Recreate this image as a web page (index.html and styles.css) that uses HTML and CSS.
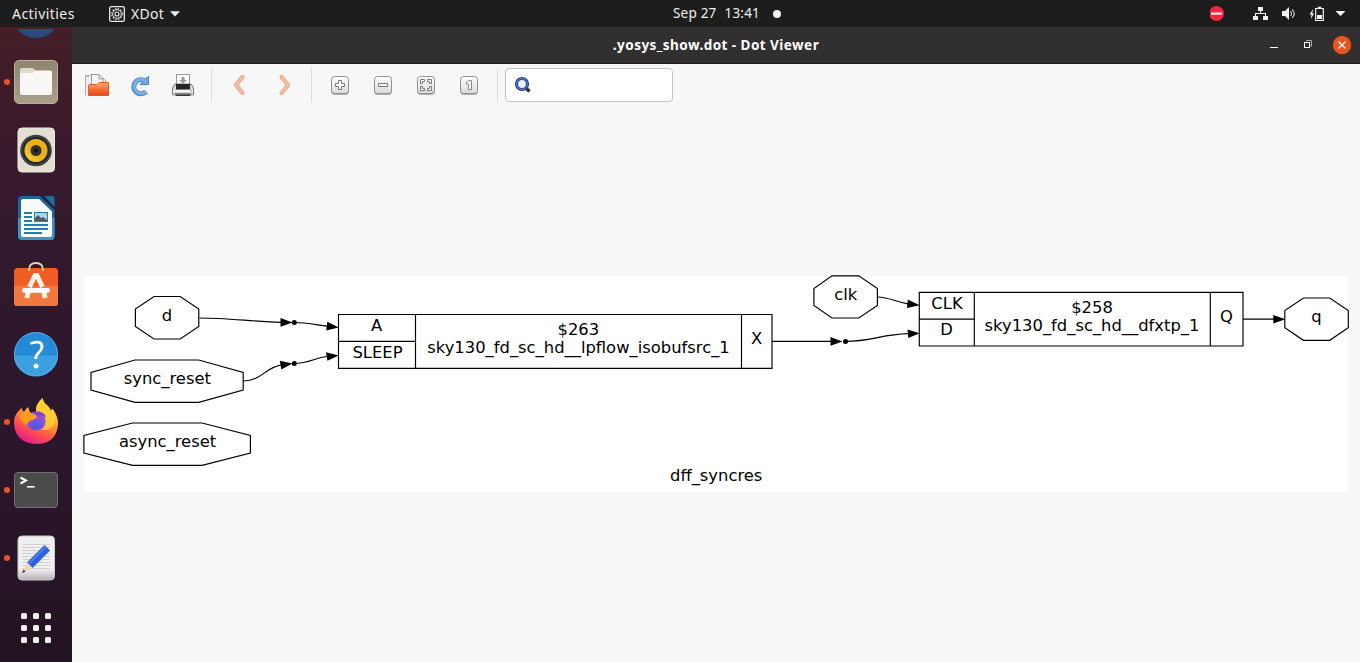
FILE: index.html
```html
<!DOCTYPE html>
<html lang="en">
<head>
<meta charset="utf-8">
<title>.yosys_show.dot - Dot Viewer</title>
<link rel="stylesheet" href="styles.css">
</head>
<body>
<header class="topbar">
  <div class="top-left">
    <span class="activities">Activities</span>
    <svg class="app-icon" width="16" height="16" viewBox="0 0 16 16"><rect x=".7" y=".7" width="14.6" height="14.6" rx="1.5" fill="none" stroke="#eee" stroke-width="1.3"/><circle cx="8" cy="8" r="4.3" fill="none" stroke="#ddd" stroke-width="1"/><circle cx="8" cy="8" r="5.3" fill="none" stroke="#ddd" stroke-width="1.3" stroke-dasharray="1.5 1.28"/><circle cx="8" cy="8" r="2" fill="none" stroke="#eee" stroke-width="1.1"/></svg>
    <span class="app-name">XDot</span>
    <svg class="caret" width="10" height="6" viewBox="0 0 10 6"><path d="M0 .3H10L5 5.5Z" fill="#eee"/></svg>
  </div>
  <div class="clock"><span>Sep 27</span><span>13:41</span><i class="notify"></i></div>
  <svg class="tray" width="140" height="20" viewBox="0 0 140 20">
    <circle cx="6.500" cy="9.500" r="7.500" fill="#f5243f"/><rect x="1" y="8.600" width="11" height="2" fill="#fff"/>
    <g fill="#f2f2f2"><rect x="48" y="3" width="5" height="4"/><rect x="43" y="12" width="5" height="4"/><rect x="53" y="12" width="5" height="4"/><path d="M50 7h1v2h5v3h-1v-2h-9v2h-1V9h5Z"/>
    <path d="M72 7h3l4-4v13l-4-4h-3Z"/><path d="M103.200 5l-3.700 5.500h2l-.7 4.500 3.200-5.500h-1.700Z"/><rect x="107" y="11" width="5" height="4"/><path d="M125.500 7H135.500L130.500 12Z"/></g>
    <path d="M80.500 7.200Q82.500 9.500 80.500 12M82.200 5.300Q86.200 9.500 82.200 13.800" fill="none" stroke="#ccc" stroke-width="1.100"/>
    <path d="M105.700 4.500H113.300V16.500H105.700ZM107.800 3.300h3.400" fill="none" stroke="#f2f2f2" stroke-width="1.200"/>
  </svg>
</header>
<div class="desktop">
  <nav class="dock">
    <div class="dock-cut"><svg width="48" height="21" viewBox="0 0 48 21"><path d="M5 2H43Q36 11 24 11T5 2Z" fill="#294b80"/></svg></div>
    <div class="launcher running"><svg width="48" height="48" viewBox="0 0 48 48">
      <defs><linearGradient id="files" x2="0" y2="1"><stop stop-color="#8e8470"/><stop offset="1" stop-color="#aaa08b"/></linearGradient></defs>
      <rect x="2.500" y="2.500" width="43" height="43" rx="4.500" fill="url(#files)" stroke="#b8b09c"/><path d="M8 12q0-2 2-2h10q2 0 4 3v8H8Z" fill="#ddd9cb"/><path d="M8 17q0-2 2-2h10q2 0 3-2 1-.5 2-.5h13q2 0 2 2v20q0 2.500-2.500 2.500h-27Q8 37 8 34.500Z" fill="#f9f8f6"/></svg></div>
    <div class="launcher"><svg width="48" height="48" viewBox="0 0 48 48">
      <defs><linearGradient id="cone" x1="1" x2="0" y2="1"><stop stop-color="#f0b414"/><stop offset=".5" stop-color="#e8ae12"/><stop offset="1" stop-color="#fad43a"/></linearGradient></defs>
      <rect x="6" y="2" width="36.500" height="44" rx="4" fill="#e3dfd4" stroke="#eee9df"/><circle cx="24" cy="24.500" r="15.800" fill="#3d4248"/><circle cx="24" cy="24.500" r="13.500" fill="#22262a"/><circle cx="24" cy="24.500" r="11.500" fill="url(#cone)"/><circle cx="24" cy="24.500" r="5.500" fill="#30302e"/><circle cx="24" cy="24.500" r="2" fill="#111"/></svg></div>
    <div class="launcher"><svg width="48" height="48" viewBox="0 0 48 48">
      <path d="M6 6q0-4 4-4H28L42.500 16V42q0 4-4 4H10q-4 0-4-4Z" fill="#17699a"/><path d="M6 24H42.500V42q0 4-4 4H10q-4 0-4-4Z" fill="#3f93be"/><path d="M9 7q0-2 2-2H27L40 17.500V41q0 2-2 2H11q-2 0-2-2Z" fill="#f8fafb"/><path d="M32 2h8q2.500 0 2.500 2.500V13Z" fill="#14709f"/>
      <path d="M12 19h8M12 23h8M12 27h8M12 31h24M12 35h24M12 39h18" stroke="#247eac" stroke-width="2"/><rect x="22.500" y="18.500" width="13" height="9" fill="#a9daf4" stroke="#247eac"/><path d="M23 27v-3l3-3 3 3 2-1 4 3v1Z" fill="#535b60"/><path d="M32 19h3v3Z" fill="#f0b929"/></svg></div>
    <div class="launcher"><svg width="48" height="48" viewBox="0 0 48 48">
      <rect x="2" y="6" width="44" height="38" rx="3.500" fill="#f05e25"/><path d="M2 24H46V40.500q0 3.500-3.500 3.500h-37q-3.500 0-3.500-3.500Z" fill="#f0793f"/><path d="M17 9V8q0-7 7-7t7 7v1" fill="none" stroke="#e8d3a0" stroke-width="1.800"/>
      <path d="M17.500 25L23 13.500h2L30.500 25M16.500 29l-1.700 7M31.500 29l1.700 7" fill="none" stroke="#fff3e9" stroke-width="4.800"/><rect x="10" y="26" width="28" height="4.800" rx="2.400" fill="#fff"/></svg></div>
    <div class="launcher"><svg width="48" height="48" viewBox="0 0 48 48"><circle cx="24" cy="24" r="22" fill="#258bd6"/><path d="M2 25.500H46A22 21 0 0 1 2 25.500Z" fill="#3ba0df"/><circle cx="24" cy="24" r="21.500" fill="none" stroke="#5aafe6" stroke-width=".8"/><path d="M18.500 13.500q11.500-4 11.500 3.200c0 5.500-6.300 5.300-6.300 12.300" fill="none" stroke="#fff" stroke-width="2.900"/><circle cx="24" cy="36" r="2.500" fill="#fff"/></svg></div>
    <div class="launcher running"><svg width="48" height="48" viewBox="0 0 48 48">
      <defs><linearGradient id="flame" x1=".8" y1="0" x2=".3" y2="1"><stop stop-color="#ffe546"/><stop offset=".38" stop-color="#ffad2c"/><stop offset=".7" stop-color="#ff534a"/><stop offset="1" stop-color="#e5168d"/></linearGradient><radialGradient id="globe" cx=".5" cy=".8"><stop stop-color="#425be5"/><stop offset="1" stop-color="#9051e2"/></radialGradient></defs>
      <path d="M9.500 9.500Q10 13 12 14q1.500-3.500 4.500-5 0 4 2.500 6l5-1Q23 6 30.500 0q1 5 5.500 8 2 2 3 5 1-1 1-2.500Q46.500 18 46 26 44.500 46 24 46 3 45 2 25 2 18 6 13.500Q8 12 9.500 9.500Z" fill="url(#flame)"/><path d="M30.500 0Q24 6 24 14q8 0 9.500 7 1 8-4.500 11 13 1 14.500-11 1-6-3.500-10.500L39 13Q36 8 34.500 6.500 31 4 30.500 0Z" fill="#ffcf38" opacity=".8"/><circle cx="24" cy="23" r="9.500" fill="url(#globe)"/><path d="M7 17q8-4 12-2l6 2.500q0 3-5 4.500-4 1-5 5-7-4-8-10Z" fill="#ff9a21"/><path d="M21 14q10-2 13 5-5-2-9-1Z" fill="#8146cf"/></svg></div>
    <div class="launcher running"><svg width="48" height="48" viewBox="0 0 48 48"><rect x="2.500" y="6.500" width="43" height="35" rx="3.500" fill="#4b4b4a" stroke="#72706d"/><path d="M8.500 11.500l5.500 3-5.500 3" fill="none" stroke="#fff" stroke-width="2"/><path d="M15 20.800h7.500" stroke="#fff" stroke-width="1.600"/></svg></div>
    <div class="launcher running"><svg width="48" height="48" viewBox="0 0 48 48">
      <defs><linearGradient id="paper" x2="0" y2="1"><stop offset=".75" stop-color="#f1f0f1"/><stop offset="1" stop-color="#b5b2b7"/></linearGradient></defs>
      <rect x="6" y="2" width="36.500" height="44" rx="4" fill="url(#paper)" stroke="#cac7ca"/><path d="M10 10.500h28M10 13.500h28M10 16.500h28M10 19.500h28M10 22.500h28M10 25.500h28M10 28.500h28M10 31.500h28M10 34.500h28" stroke="#d2d2d4"/><path d="M32.500 11l5.500 5.500L20.500 34 15 28.500Z" fill="#2d62db"/><path d="M34 12.500L16.500 30" stroke="#4c80ef" stroke-width="2"/><path d="M15 28.500l5.500 5.500-10 5Z" fill="#f4d6b2"/><path d="M11.500 35.500l2 2-3.500 1.500Z" fill="#333"/></svg></div>
    <div class="show-apps"><i></i><i></i><i></i><i></i><i></i><i></i><i></i><i></i><i></i></div>
  </nav>
  <main class="window">
    <div class="titlebar"><h1>.yosys_show.dot - Dot Viewer</h1>
      <svg class="controls" width="84" height="20" viewBox="0 0 84 20"><path d="M2 12.500h8" stroke="#fff"/><path d="M38.500 6.500V5.500H43.500V11H42" fill="none" stroke="#aaa"/><rect x="36.500" y="7.500" width="5" height="5" fill="none" stroke="#fff"/><circle cx="74" cy="10" r="9.200" fill="#e95420"/><path d="M70.500 6.500l7 7m0-7l-7 7" stroke="#fff" stroke-width="1.400"/></svg>
    </div>
    <div class="toolbar">
      <svg width="0" height="0" class="defs"><defs><linearGradient id="key" x2="0" y2="1"><stop stop-color="#fff"/><stop offset="1" stop-color="#d9d9d9"/></linearGradient><linearGradient id="orange" x2="0" y2="1"><stop stop-color="#f8b27d"/><stop offset=".6" stop-color="#ef682c"/><stop offset="1" stop-color="#e64818"/></linearGradient></defs></svg>
      <div class="tools files">
        <button><svg width="24" height="24" viewBox="0 0 24 24"><path d="M.5 22.500V2.500h4l1-1H13L20.500 7v4" fill="#efefef" stroke="#aaa"/><path d="M6.500 15V1.500H14l4 4V12" fill="#fafafa" stroke="#999"/><path d="M14 1.500V6h4" fill="none" stroke="#999"/><path d="M2 3.500h2" stroke="#eba14d"/><path d="M3.500 22.500V13q0-1.500 1.500-1.500h7l2-2h9.500v13Z" fill="url(#orange)" stroke="#dc5d2c"/></svg></button>
        <button><svg width="24" height="24" viewBox="0 0 24 24"><path d="M16 7.500A7 7 0 1 0 18 18.500" fill="none" stroke="#4684c5" stroke-width="5"/><path d="M20.500 3.500v8h-8.500l3-3 2-2.500Z" fill="#75a8df" stroke="#4684c5"/><path d="M17 7.500A7 7 0 1 0 18 18.500" fill="none" stroke="#7fb0e5" stroke-width="3"/></svg></button>
        <button><svg width="24" height="24" viewBox="0 0 24 24"><path d="M5.500 13V1.500h13V13" fill="#fff" stroke="#999"/><path d="M10.500 4h3v3h2.500l-4 3.500L8 7h2.500Z" fill="#999"/><path d="M4 11h16l2.500 4v6q0 1-1 1h-19q-1 0-1-1v-6Z" fill="#d8d8d8" stroke="#777"/><path d="M5 11h14v5.500H5Z" fill="#242424"/><path d="M2 18h20" stroke="#f6f6f6" stroke-width="2"/><path d="M4 21h16M5 22.500h14" stroke="#333" stroke-width="1"/><circle cx="20" cy="18" r="1" fill="#8bd05f"/></svg></button>
      </div>
      <i class="sep"></i>
      <div class="history">
        <button><svg width="12" height="20" viewBox="0 0 12 20"><path d="M8.500 2L2 10l6.500 8" fill="none" stroke="#e9a184" stroke-width="4" stroke-linecap="round" stroke-linejoin="round"/><path d="M8.500 2L2 10l6.500 8" fill="none" stroke="#f3bea6" stroke-width="2.200" stroke-linecap="round"/></svg></button>
        <button><svg width="12" height="20" viewBox="0 0 12 20"><path d="M2.500 2L9 10l-6.500 8" fill="none" stroke="#e9a184" stroke-width="4" stroke-linecap="round" stroke-linejoin="round"/><path d="M2.500 2L9 10l-6.500 8" fill="none" stroke="#f3bea6" stroke-width="2.200" stroke-linecap="round"/></svg></button>
      </div>
      <i class="sep"></i>
      <div class="tools zooms">
        <button><svg class="key" width="20" height="20" viewBox="0 0 20 20"><rect x="1.500" y="1.500" width="17" height="17" rx="3" fill="url(#key)" stroke="#929292"/><path d="M8.500 5.500h3v3h3v3h-3v3h-3v-3h-3v-3h3Z" fill="#fff" stroke="#777"/></svg></button>
        <button><svg class="key" width="20" height="20" viewBox="0 0 20 20"><rect x="1.500" y="1.500" width="17" height="17" rx="3" fill="url(#key)" stroke="#929292"/><path d="M5.500 8.500h9v3h-9Z" fill="#fff" stroke="#777"/></svg></button>
        <button><svg class="key" width="20" height="20" viewBox="0 0 20 20"><rect x="1.500" y="1.500" width="17" height="17" rx="3" fill="url(#key)" stroke="#929292"/><path d="M4.500 4.500h4v2h-2v2h-2ZM11.500 4.500h4v4h-2v-2h-2ZM4.500 11.500h2v2h2v2h-4ZM13.500 11.500h2v4h-4v-2h2Z" fill="#fff" stroke="#777"/></svg></button>
        <button><svg class="key" width="20" height="20" viewBox="0 0 20 20"><rect x="1.500" y="1.500" width="17" height="17" rx="3" fill="url(#key)" stroke="#929292"/><path d="M9.500 5.500h3v9h-3v-5.500h-2v-2q1.500 0 2-1.500Z" fill="#fff" stroke="#888"/></svg></button>
      </div>
      <i class="sep"></i>
      <div class="search"><svg width="18" height="18" viewBox="0 0 18 18"><path d="M11 11l4.500 4.500" stroke="#353535" stroke-width="3.600"/><circle cx="8" cy="8" r="5.500" fill="#edf0f8" stroke="#263b86" stroke-width="3.200"/><circle cx="8" cy="8" r="5.500" fill="none" stroke="#5277c8" stroke-width="1.300"/></svg></div>
    </div>
    <svg class="graph" width="1288" height="556" viewBox="72 106 1288 556">
      <rect x="83.700" y="276" width="1264.300" height="216" fill="#fff"/>
      <g class="shape">
        <path d="M154 296.500H180.200L198.800 309V326.500L180.200 339H154L135.400 326.500V309Z"/>
        <path d="M135 360H198.700L243.200 372.500V390L198.700 402.300H135L91 390V372.500Z"/>
        <path d="M132.500 423H202L250.400 435.500V453L202 465.300H132.500L83.900 453V435.500Z"/>
        <path d="M832 275.800H858.800L877.400 288.500V305.500L858.800 318H832L813.900 305.500V288.500Z"/>
        <path d="M1303.500 298H1329.700L1348.300 310.500V327.700L1329.700 340.300H1303.500L1284.800 327.700V310.500Z"/>
        <path d="M338.500 314.500H772V368.300H338.500ZM415.500 314.500V368.300M741.500 314.500V368.300M338.500 341.400H415.500"/>
        <path d="M919.300 292.300H1243V346H919.300ZM974.300 292.300V346M1210.300 292.300V346M919.300 319.100H974.300"/>
        <path d="M199.500 318C226 318 253 321.500 281 322.300M294 322.500C306 322.500 315 324.600 327 326.200M243.500 381C262 380.500 265 367.500 281 365.200M294 363.500C309 363.500 315 357.700 327 356.500M772 341.400H831M845 341.400C871 341.400 882 334.300 908 333.600M877.500 297C890 297.500 896 302 908 303.900M1243 319.200H1274"/>
      </g>
      <g class="arrow"><path d="M280.500 318V326.800L292.500 322.500ZM327.300 321.800L326.200 330.400L338.700 327.500ZM279.800 360.800L281.300 369.500L292.500 363.500ZM326 352.200L327.400 360.800L338.700 355.500ZM830.500 337.100V345.700L842.500 341.400ZM907.500 329.500L908.300 338L919.700 333.300ZM907.800 299.500L907 308L919.700 305.200ZM1273.300 314.900V323.500L1285.300 319.200Z"/><circle cx="294.300" cy="322.500" r="2.500"/><circle cx="294.300" cy="363.500" r="2.500"/><circle cx="845.500" cy="341.400" r="2.500"/></g>
      <g class="label">
        <text x="167" y="321">d</text><text x="167.300" y="384">sync_reset</text><text x="167.600" y="447">async_reset</text>
        <text x="376.500" y="331">A</text><text x="377.500" y="358">SLEEP</text><text x="578.300" y="335">$263</text><text x="578.500" y="353">sky130_fd_sc_hd__lpflow_isobufsrc_1</text><text x="756.700" y="344">X</text>
        <text x="845.800" y="300">clk</text><text x="947" y="309">CLK</text><text x="946.500" y="335">D</text><text x="1092" y="313">$258</text><text x="1092" y="331">sky130_fd_sc_hd__dfxtp_1</text><text x="1226.500" y="322">Q</text><text x="1316.500" y="322">q</text><text x="716.200" y="481">dff_syncres</text>
      </g>
    </svg>
  </main>
</div>
</body>
</html>
```
FILE: styles.css
```css
* { box-sizing: border-box; }
body { margin: 0; width: 1360px; height: 662px; overflow: hidden; display: flex; flex-direction: column; background: #f7f7f7; font-family: "Noto Sans", "Open Sans", sans-serif; }
svg { display: block; flex: none; }
.topbar { height: 27px; flex: none; display: grid; grid-template-columns: 673px auto 1fr; align-items: center; background: #1d1d1d; color: #eee; font-size: 14px; line-height: 27px; }
.top-left { display: flex; align-items: center; padding-left: 12px; }
.activities { width: 97px; letter-spacing: .45px; }
.app-name { margin-left: 6px; width: 38px; letter-spacing: .3px; }
.caret { margin-left: 1px; }
.clock { display: flex; align-items: center; gap: 8px; font-size: 13.500px; letter-spacing: .2px; white-space: nowrap; }
.notify { width: 8px; height: 8px; margin-left: 5px; border-radius: 50%; background: #f2f2f2; }
.tray { justify-self: end; margin-right: 10px; }
.desktop { display: flex; flex: 1; min-height: 0; }
.dock { width: 72px; display: flex; flex-direction: column; background: linear-gradient(#451e26 0, #3a1a2b 16%, #30182d 40%, #2a162b 70%, #231422); }
.dock-cut { height: 21px; padding-left: 12px; }
.launcher { height: 68px; display: flex; align-items: center; justify-content: center; position: relative; }
.running::before { content: ""; position: absolute; left: 4px; top: 31px; width: 6px; height: 6px; border-radius: 50%; background: #e95420; }
.show-apps { display: grid; grid-template-columns: repeat(3, 6px); grid-auto-rows: 6px; gap: 6px; padding: 21px 0 0 21px; }
.show-apps i { background: #f0efed; border-radius: 1.500px; }
.window { flex: 1; display: flex; flex-direction: column; min-width: 0; }
.titlebar { height: 37px; flex: none; display: grid; grid-template-columns: 1fr auto 1fr; align-items: center; background: #322f30; border-bottom: 1px solid #191718; color: #fff; }
.titlebar h1 { grid-column: 2; margin: 0; padding-top: 1px; font-size: 13.500px; font-weight: 700; line-height: 35px; letter-spacing: .46px; }
.controls { justify-self: end; margin-right: 8px; }
.toolbar { height: 42px; flex: none; display: flex; align-items: center; padding-left: 3px; }
.files { margin-right: 1px; }
.tools, .history { display: flex; align-items: center; }
.tools button, .history button { border: 0; padding: 0; background: none; width: 43px; height: 34px; display: flex; align-items: center; justify-content: center; }
.history { padding: 0 5px; }
.history button { width: 45px; }
.key { filter: drop-shadow(0 1px 0 #aaa); }
.sep { width: 1px; height: 34px; background: #dcdcdc; margin-left: 6px; }
.history + .sep { margin-left: -1px; }
.zooms { margin: 0 1px 0 6px; }
.search { width: 168px; height: 34px; margin-left: 7px; border: 1px solid #c3c3c3; border-radius: 4px; background: #fff; display: flex; align-items: center; padding-left: 8px; }
.graph { background: #f7f7f7; }
.shape path { fill: none; stroke: #000; stroke-width: 1.170; }
.label { font-family: "DejaVu Sans", sans-serif; font-size: 16.380px; text-anchor: middle; }
```
